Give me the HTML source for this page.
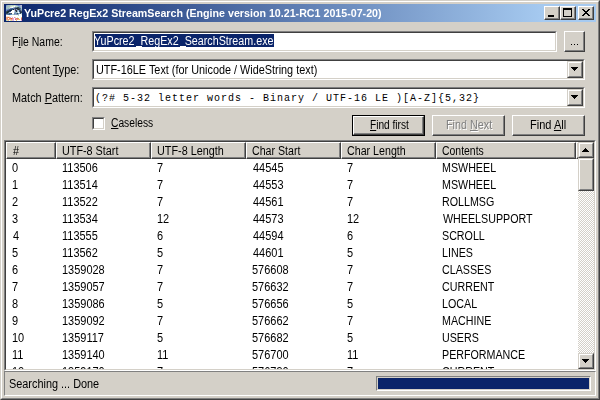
<!DOCTYPE html>
<html><head><meta charset="utf-8">
<style>
*{margin:0;padding:0;box-sizing:border-box}
html,body{width:600px;height:400px;overflow:hidden;background:#d4d0c8}
body{position:relative;font-family:"Liberation Sans",sans-serif;font-size:11px;color:#000}
.a{position:absolute}
.t{position:absolute;white-space:nowrap;line-height:13px}
.sunk{position:absolute;border-top:1px solid #808080;border-left:1px solid #808080;border-right:1px solid #fff;border-bottom:1px solid #fff}
.sunk>.in{position:absolute;left:0;top:0;right:0;bottom:0;border-top:1px solid #404040;border-left:1px solid #404040;border-right:1px solid #d4d0c8;border-bottom:1px solid #d4d0c8}
.rais{position:absolute;border-top:1px solid #d4d0c8;border-left:1px solid #d4d0c8;border-right:1px solid #404040;border-bottom:1px solid #404040;background:#d4d0c8}
.rais>.in{position:absolute;left:0;top:0;right:0;bottom:0;border-top:1px solid #fff;border-left:1px solid #fff;border-right:1px solid #808080;border-bottom:1px solid #808080}
.btn{position:absolute;border-top:1px solid #fff;border-left:1px solid #fff;border-right:1px solid #404040;border-bottom:1px solid #404040;background:#d4d0c8}
.btn>.in{position:absolute;left:0;top:0;right:0;bottom:0;border-right:1px solid #808080;border-bottom:1px solid #808080}
.u{text-decoration:underline}
svg{position:absolute;display:block}
.hd{position:absolute;top:0;height:17px;background:#d4d0c8;border-top:1px solid #fff;border-left:1px solid #fff;border-right:1px solid #404040;border-bottom:1px solid #404040}
.hd>.hi{position:absolute;left:0;top:0;right:0;bottom:0;border-right:1px solid #808080;border-bottom:1px solid #808080}
</style></head><body>
<div class="a" style="left:0;top:0;width:600px;height:400px;border-top:1px solid #d4d0c8;border-left:1px solid #d4d0c8;border-right:1px solid #404040;border-bottom:1px solid #404040"><div class="a" style="left:0;top:0;right:0;bottom:0;border-top:1px solid #fff;border-left:1px solid #fff;border-right:1px solid #808080;border-bottom:1px solid #808080"></div></div>
<div class="a" style="left:4px;top:4px;width:592px;height:18px;background:linear-gradient(to right,#0a246a 0,#a6caf0 540px)"></div>
<svg style="left:6px;top:5px" width="16" height="16" shape-rendering="crispEdges"><rect x="0" y="0" width="1" height="1" fill="#7090c8"/><rect x="1" y="0" width="1" height="1" fill="#90b0c0"/><rect x="2" y="0" width="1" height="1" fill="#a0c0c0"/><rect x="3" y="0" width="1" height="1" fill="#a0c0c0"/><rect x="4" y="0" width="1" height="1" fill="#b0c8c0"/><rect x="5" y="0" width="1" height="1" fill="#c0d0d0"/><rect x="6" y="0" width="1" height="1" fill="#b0d0b0"/><rect x="7" y="0" width="1" height="1" fill="#b0d8b0"/><rect x="8" y="0" width="1" height="1" fill="#d0d0e0"/><rect x="9" y="0" width="1" height="1" fill="#b0c8d0"/><rect x="10" y="0" width="1" height="1" fill="#90a8d0"/><rect x="11" y="0" width="1" height="1" fill="#8098c8"/><rect x="12" y="0" width="1" height="1" fill="#6080d0"/><rect x="13" y="0" width="1" height="1" fill="#7090d0"/><rect x="14" y="0" width="1" height="1" fill="#b0b0d0"/><rect x="15" y="0" width="1" height="1" fill="#c0b0d0"/><rect x="0" y="1" width="1" height="1" fill="#90b0d0"/><rect x="1" y="1" width="1" height="1" fill="#a0c0c0"/><rect x="2" y="1" width="1" height="1" fill="#b0b0c0"/><rect x="3" y="1" width="1" height="1" fill="#a8c8b8"/><rect x="4" y="1" width="1" height="1" fill="#c0d8c0"/><rect x="5" y="1" width="1" height="1" fill="#d0e0d0"/><rect x="6" y="1" width="1" height="1" fill="#e0f0e0"/><rect x="7" y="1" width="1" height="1" fill="#e0f0e0"/><rect x="8" y="1" width="1" height="1" fill="#ffffff"/><rect x="9" y="1" width="1" height="1" fill="#c0e0c0"/><rect x="10" y="1" width="1" height="1" fill="#c0e0c0"/><rect x="11" y="1" width="1" height="1" fill="#b0d0c0"/><rect x="12" y="1" width="1" height="1" fill="#90b0c0"/><rect x="13" y="1" width="1" height="1" fill="#80a0c0"/><rect x="14" y="1" width="1" height="1" fill="#a0b0d0"/><rect x="15" y="1" width="1" height="1" fill="#a0c0d0"/><rect x="0" y="2" width="1" height="1" fill="#a0c0c0"/><rect x="1" y="2" width="1" height="1" fill="#a0c0c0"/><rect x="2" y="2" width="1" height="1" fill="#b0c0c0"/><rect x="3" y="2" width="1" height="1" fill="#b0d0c0"/><rect x="4" y="2" width="1" height="1" fill="#e0f0e0"/><rect x="5" y="2" width="1" height="1" fill="#f0f8f0"/><rect x="6" y="2" width="1" height="1" fill="#ffffff"/><rect x="7" y="2" width="1" height="1" fill="#c0c8e0"/><rect x="8" y="2" width="1" height="1" fill="#90a8c0"/><rect x="9" y="2" width="1" height="1" fill="#607890"/><rect x="10" y="2" width="1" height="1" fill="#6080a0"/><rect x="11" y="2" width="1" height="1" fill="#405060"/><rect x="12" y="2" width="1" height="1" fill="#305060"/><rect x="13" y="2" width="1" height="1" fill="#6080a0"/><rect x="14" y="2" width="1" height="1" fill="#90b0c0"/><rect x="15" y="2" width="1" height="1" fill="#c0c0d0"/><rect x="0" y="3" width="1" height="1" fill="#a0c0c0"/><rect x="1" y="3" width="1" height="1" fill="#a0c0c0"/><rect x="2" y="3" width="1" height="1" fill="#90b0c0"/><rect x="3" y="3" width="1" height="1" fill="#a0c0d0"/><rect x="4" y="3" width="1" height="1" fill="#6080b0"/><rect x="5" y="3" width="1" height="1" fill="#5070b0"/><rect x="6" y="3" width="1" height="1" fill="#4060a0"/><rect x="7" y="3" width="1" height="1" fill="#6080b0"/><rect x="8" y="3" width="1" height="1" fill="#506080"/><rect x="9" y="3" width="1" height="1" fill="#304060"/><rect x="10" y="3" width="1" height="1" fill="#203040"/><rect x="11" y="3" width="1" height="1" fill="#203030"/><rect x="12" y="3" width="1" height="1" fill="#304050"/><rect x="13" y="3" width="1" height="1" fill="#305060"/><rect x="14" y="3" width="1" height="1" fill="#507090"/><rect x="15" y="3" width="1" height="1" fill="#a0c0d0"/><rect x="0" y="4" width="1" height="1" fill="#80a0c0"/><rect x="1" y="4" width="1" height="1" fill="#7090c0"/><rect x="2" y="4" width="1" height="1" fill="#6080b0"/><rect x="3" y="4" width="1" height="1" fill="#405080"/><rect x="4" y="4" width="1" height="1" fill="#305080"/><rect x="5" y="4" width="1" height="1" fill="#204060"/><rect x="6" y="4" width="1" height="1" fill="#306080"/><rect x="7" y="4" width="1" height="1" fill="#102030"/><rect x="8" y="4" width="1" height="1" fill="#8090b0"/><rect x="9" y="4" width="1" height="1" fill="#504060"/><rect x="10" y="4" width="1" height="1" fill="#80a0d0"/><rect x="11" y="4" width="1" height="1" fill="#405060"/><rect x="12" y="4" width="1" height="1" fill="#203030"/><rect x="13" y="4" width="1" height="1" fill="#304050"/><rect x="14" y="4" width="1" height="1" fill="#6080a0"/><rect x="15" y="4" width="1" height="1" fill="#90b0c0"/><rect x="0" y="5" width="1" height="1" fill="#6080d0"/><rect x="1" y="5" width="1" height="1" fill="#405080"/><rect x="2" y="5" width="1" height="1" fill="#305070"/><rect x="3" y="5" width="1" height="1" fill="#203050"/><rect x="4" y="5" width="1" height="1" fill="#102040"/><rect x="5" y="5" width="1" height="1" fill="#204050"/><rect x="6" y="5" width="1" height="1" fill="#ffffff"/><rect x="7" y="5" width="1" height="1" fill="#ffffff"/><rect x="8" y="5" width="1" height="1" fill="#c0d8f0"/><rect x="9" y="5" width="1" height="1" fill="#503050"/><rect x="10" y="5" width="1" height="1" fill="#304040"/><rect x="11" y="5" width="1" height="1" fill="#a0b0d0"/><rect x="12" y="5" width="1" height="1" fill="#a0c0d0"/><rect x="13" y="5" width="1" height="1" fill="#305080"/><rect x="14" y="5" width="1" height="1" fill="#405070"/><rect x="15" y="5" width="1" height="1" fill="#8090a0"/><rect x="0" y="6" width="1" height="1" fill="#405060"/><rect x="1" y="6" width="1" height="1" fill="#204040"/><rect x="2" y="6" width="1" height="1" fill="#102030"/><rect x="3" y="6" width="1" height="1" fill="#203060"/><rect x="4" y="6" width="1" height="1" fill="#304080"/><rect x="5" y="6" width="1" height="1" fill="#ffffff"/><rect x="6" y="6" width="1" height="1" fill="#ffffff"/><rect x="7" y="6" width="1" height="1" fill="#ffffff"/><rect x="8" y="6" width="1" height="1" fill="#c0d8f0"/><rect x="9" y="6" width="1" height="1" fill="#80a0b0"/><rect x="10" y="6" width="1" height="1" fill="#203030"/><rect x="11" y="6" width="1" height="1" fill="#a0b0c0"/><rect x="12" y="6" width="1" height="1" fill="#d0e0f0"/><rect x="13" y="6" width="1" height="1" fill="#305080"/><rect x="14" y="6" width="1" height="1" fill="#203060"/><rect x="15" y="6" width="1" height="1" fill="#405060"/><rect x="0" y="7" width="1" height="1" fill="#204040"/><rect x="1" y="7" width="1" height="1" fill="#102030"/><rect x="2" y="7" width="1" height="1" fill="#305060"/><rect x="3" y="7" width="1" height="1" fill="#a0c0e0"/><rect x="4" y="7" width="1" height="1" fill="#e0f0ff"/><rect x="5" y="7" width="1" height="1" fill="#ffffff"/><rect x="6" y="7" width="1" height="1" fill="#ffffff"/><rect x="7" y="7" width="1" height="1" fill="#ffffff"/><rect x="8" y="7" width="1" height="1" fill="#a0c0d0"/><rect x="9" y="7" width="1" height="1" fill="#8098b0"/><rect x="10" y="7" width="1" height="1" fill="#a0c0d0"/><rect x="11" y="7" width="1" height="1" fill="#b0d0e0"/><rect x="12" y="7" width="1" height="1" fill="#ffffff"/><rect x="13" y="7" width="1" height="1" fill="#a0c0d0"/><rect x="14" y="7" width="1" height="1" fill="#203040"/><rect x="15" y="7" width="1" height="1" fill="#304050"/><rect x="0" y="8" width="1" height="1" fill="#304050"/><rect x="1" y="8" width="1" height="1" fill="#405060"/><rect x="2" y="8" width="1" height="1" fill="#6080a0"/><rect x="3" y="8" width="1" height="1" fill="#405070"/><rect x="4" y="8" width="1" height="1" fill="#506080"/><rect x="5" y="8" width="1" height="1" fill="#405060"/><rect x="6" y="8" width="1" height="1" fill="#ffffff"/><rect x="7" y="8" width="1" height="1" fill="#ffffff"/><rect x="8" y="8" width="1" height="1" fill="#6080b0"/><rect x="9" y="8" width="1" height="1" fill="#7090c0"/><rect x="10" y="8" width="1" height="1" fill="#6080b0"/><rect x="11" y="8" width="1" height="1" fill="#305050"/><rect x="12" y="8" width="1" height="1" fill="#7090c0"/><rect x="13" y="8" width="1" height="1" fill="#7090c0"/><rect x="14" y="8" width="1" height="1" fill="#405060"/><rect x="15" y="8" width="1" height="1" fill="#a0c0d0"/><rect x="0" y="9" width="1" height="1" fill="#7090c0"/><rect x="1" y="9" width="1" height="1" fill="#6080a0"/><rect x="2" y="9" width="1" height="1" fill="#4070a0"/><rect x="3" y="9" width="1" height="1" fill="#306090"/><rect x="4" y="9" width="1" height="1" fill="#5080b0"/><rect x="5" y="9" width="1" height="1" fill="#7090c0"/><rect x="6" y="9" width="1" height="1" fill="#b0d0e0"/><rect x="7" y="9" width="1" height="1" fill="#a0c8c0"/><rect x="8" y="9" width="1" height="1" fill="#8090b0"/><rect x="9" y="9" width="1" height="1" fill="#90b0c0"/><rect x="10" y="9" width="1" height="1" fill="#8090c0"/><rect x="11" y="9" width="1" height="1" fill="#7090b0"/><rect x="12" y="9" width="1" height="1" fill="#90b0c0"/><rect x="13" y="9" width="1" height="1" fill="#ffffff"/><rect x="14" y="9" width="1" height="1" fill="#ffffff"/><rect x="15" y="9" width="1" height="1" fill="#e0f0e0"/><rect x="0" y="10" width="1" height="1" fill="#ffffff"/><rect x="1" y="10" width="1" height="1" fill="#ffffff"/><rect x="2" y="10" width="1" height="1" fill="#ffffff"/><rect x="3" y="10" width="1" height="1" fill="#f0f8ff"/><rect x="4" y="10" width="1" height="1" fill="#f0f8f8"/><rect x="5" y="10" width="1" height="1" fill="#ffffff"/><rect x="6" y="10" width="1" height="1" fill="#ffffff"/><rect x="7" y="10" width="1" height="1" fill="#ffffff"/><rect x="8" y="10" width="1" height="1" fill="#ffffff"/><rect x="9" y="10" width="1" height="1" fill="#ffffff"/><rect x="10" y="10" width="1" height="1" fill="#ffffff"/><rect x="11" y="10" width="1" height="1" fill="#ffffff"/><rect x="12" y="10" width="1" height="1" fill="#c0e0c0"/><rect x="13" y="10" width="1" height="1" fill="#ffffff"/><rect x="14" y="10" width="1" height="1" fill="#ffffff"/><rect x="15" y="10" width="1" height="1" fill="#ffffff"/><rect x="0" y="11" width="1" height="1" fill="#ffe8d8"/><rect x="1" y="11" width="1" height="1" fill="#ffe0d0"/><rect x="2" y="11" width="1" height="1" fill="#ffe8e0"/><rect x="3" y="11" width="1" height="1" fill="#fff0e0"/><rect x="4" y="11" width="1" height="1" fill="#ffffff"/><rect x="5" y="11" width="1" height="1" fill="#f8f0e8"/><rect x="6" y="11" width="1" height="1" fill="#ffffff"/><rect x="7" y="11" width="1" height="1" fill="#ffffff"/><rect x="8" y="11" width="1" height="1" fill="#ffffff"/><rect x="9" y="11" width="1" height="1" fill="#ffffff"/><rect x="10" y="11" width="1" height="1" fill="#ffffff"/><rect x="11" y="11" width="1" height="1" fill="#ffffff"/><rect x="12" y="11" width="1" height="1" fill="#ffffff"/><rect x="13" y="11" width="1" height="1" fill="#ffffff"/><rect x="14" y="11" width="1" height="1" fill="#ffffff"/><rect x="15" y="11" width="1" height="1" fill="#ffffff"/><rect x="0" y="12" width="1" height="1" fill="#f0a080"/><rect x="1" y="12" width="1" height="1" fill="#e09060"/><rect x="2" y="12" width="1" height="1" fill="#e08040"/><rect x="3" y="12" width="1" height="1" fill="#f0a080"/><rect x="4" y="12" width="1" height="1" fill="#d0a0d0"/><rect x="5" y="12" width="1" height="1" fill="#ffffff"/><rect x="6" y="12" width="1" height="1" fill="#e0b0d0"/><rect x="7" y="12" width="1" height="1" fill="#ffffff"/><rect x="8" y="12" width="1" height="1" fill="#e080c0"/><rect x="9" y="12" width="1" height="1" fill="#d0e0d0"/><rect x="10" y="12" width="1" height="1" fill="#ffffff"/><rect x="11" y="12" width="1" height="1" fill="#d0f0d0"/><rect x="12" y="12" width="1" height="1" fill="#ffffff"/><rect x="13" y="12" width="1" height="1" fill="#ffffff"/><rect x="14" y="12" width="1" height="1" fill="#ffffff"/><rect x="15" y="12" width="1" height="1" fill="#f0c080"/><rect x="0" y="13" width="1" height="1" fill="#f0a080"/><rect x="1" y="13" width="1" height="1" fill="#f09070"/><rect x="2" y="13" width="1" height="1" fill="#ffffff"/><rect x="3" y="13" width="1" height="1" fill="#f09070"/><rect x="4" y="13" width="1" height="1" fill="#e08060"/><rect x="5" y="13" width="1" height="1" fill="#e06030"/><rect x="6" y="13" width="1" height="1" fill="#f09080"/><rect x="7" y="13" width="1" height="1" fill="#e0a0d0"/><rect x="8" y="13" width="1" height="1" fill="#ffffff"/><rect x="9" y="13" width="1" height="1" fill="#f0a090"/><rect x="10" y="13" width="1" height="1" fill="#f08070"/><rect x="11" y="13" width="1" height="1" fill="#e08060"/><rect x="12" y="13" width="1" height="1" fill="#e09070"/><rect x="13" y="13" width="1" height="1" fill="#ffffff"/><rect x="14" y="13" width="1" height="1" fill="#ffffff"/><rect x="15" y="13" width="1" height="1" fill="#e07070"/><rect x="0" y="14" width="1" height="1" fill="#f0a080"/><rect x="1" y="14" width="1" height="1" fill="#f0a080"/><rect x="2" y="14" width="1" height="1" fill="#f0a080"/><rect x="3" y="14" width="1" height="1" fill="#f0b080"/><rect x="4" y="14" width="1" height="1" fill="#f0b090"/><rect x="5" y="14" width="1" height="1" fill="#f0a080"/><rect x="6" y="14" width="1" height="1" fill="#e0a0d0"/><rect x="7" y="14" width="1" height="1" fill="#e0a0e0"/><rect x="8" y="14" width="1" height="1" fill="#ffffff"/><rect x="9" y="14" width="1" height="1" fill="#e06070"/><rect x="10" y="14" width="1" height="1" fill="#e090c0"/><rect x="11" y="14" width="1" height="1" fill="#f0a070"/><rect x="12" y="14" width="1" height="1" fill="#f0c070"/><rect x="13" y="14" width="1" height="1" fill="#f0c060"/><rect x="14" y="14" width="1" height="1" fill="#ffffff"/><rect x="15" y="14" width="1" height="1" fill="#e07070"/><rect x="0" y="15" width="1" height="1" fill="#a0e0c0"/><rect x="1" y="15" width="1" height="1" fill="#f0c0a0"/><rect x="2" y="15" width="1" height="1" fill="#e0c080"/><rect x="3" y="15" width="1" height="1" fill="#ffffff"/><rect x="4" y="15" width="1" height="1" fill="#e0e0c0"/><rect x="5" y="15" width="1" height="1" fill="#f0d090"/><rect x="6" y="15" width="1" height="1" fill="#e0c0e0"/><rect x="7" y="15" width="1" height="1" fill="#e0b0e0"/><rect x="8" y="15" width="1" height="1" fill="#ffffff"/><rect x="9" y="15" width="1" height="1" fill="#ffffff"/><rect x="10" y="15" width="1" height="1" fill="#f0c060"/><rect x="11" y="15" width="1" height="1" fill="#ffffff"/><rect x="12" y="15" width="1" height="1" fill="#ffffff"/><rect x="13" y="15" width="1" height="1" fill="#ffffff"/><rect x="14" y="15" width="1" height="1" fill="#ffffff"/><rect x="15" y="15" width="1" height="1" fill="#e0a0d0"/></svg>
<div class="t" style="left:24.03px;top:7px;font-size:11px;font-weight:bold;color:#fff;transform:scaleX(0.9699);transform-origin:0 0">YuPcre2 RegEx2 StreamSearch (Engine version 10.21-RC1 2015-07-20)</div>
<div class="btn" style="left:544px;top:6px;width:16px;height:14px"><div class="in"></div></div>
<div class="a" style="left:548px;top:15px;width:6px;height:2px;background:#000"></div>
<div class="btn" style="left:560px;top:6px;width:16px;height:14px"><div class="in"></div></div>
<div class="a" style="left:563px;top:8px;width:9px;height:9px;border:1px solid #000;border-top-width:2px"></div>
<div class="btn" style="left:578px;top:6px;width:16px;height:14px"><div class="in"></div></div>
<svg style="left:582px;top:9px" width="8" height="7" shape-rendering="crispEdges"><path fill="#000" d="M0 0h2v1h-2zM6 0h2v1h-2zM1 1h2v1h-2zM5 1h2v1h-2zM2 2h4v1h-4zM3 3h2v1h-2zM2 4h4v1h-4zM1 5h2v1h-2zM5 5h2v1h-2zM0 6h2v1h-2zM6 6h2v1h-2z"/></svg>
<div class="t" style="left:12.13px;top:36px;font-size:12px;;transform:scaleX(0.8727);transform-origin:0 0">F<span class="u">i</span>le Name:</div>
<div class="t" style="left:12.10px;top:64px;font-size:12px;;transform:scaleX(0.9028);transform-origin:0 0">Content <span class="u">T</span>ype:</div>
<div class="t" style="left:12.09px;top:92px;font-size:12px;;transform:scaleX(0.9067);transform-origin:0 0">Match <span class="u">P</span>attern:</div>
<div class="sunk" style="left:92px;top:31px;width:465px;height:21px;background:#fff"><div class="in"></div></div>
<div class="a" style="left:95px;top:34px;width:179px;height:13px;background:#0a246a"></div>
<div class="t" style="left:94.11px;top:35px;font-size:12px;color:#fff;transform:scaleX(0.8939);transform-origin:0 0">YuPcre2_RegEx2_SearchStream.exe</div>
<div class="a" style="left:136px;top:46px;width:6px;height:1px;background:#fff"></div>
<div class="a" style="left:180px;top:46px;width:6px;height:1px;background:#fff"></div>
<div class="btn" style="left:564px;top:31px;width:21px;height:21px"><div class="in"></div></div>
<div class="a" style="left:571px;top:44px;width:1px;height:1px;background:#000"></div>
<div class="a" style="left:574px;top:44px;width:1px;height:1px;background:#000"></div>
<div class="a" style="left:577px;top:44px;width:1px;height:1px;background:#000"></div>
<div class="sunk" style="left:92px;top:59px;width:493px;height:21px;background:#fff"><div class="in"></div></div>
<div class="t" style="left:96.10px;top:64px;font-size:12px;;transform:scaleX(0.9050);transform-origin:0 0">UTF-16LE Text (for Unicode / WideString text)</div>
<div class="rais" style="left:567px;top:61px;width:16px;height:17px"><div class="in"></div></div>
<svg style="left:571px;top:67px" width="7" height="4" shape-rendering="crispEdges"><path fill="#000" d="M0 0h7v1h-7zM1 1h5v1h-5zM2 2h3v1h-3zM3 3h1v1h-1z"/></svg>
<div class="sunk" style="left:92px;top:87px;width:493px;height:21px;background:#fff"><div class="in"></div></div>
<div class="t" style="left:95px;top:92px;font-family:'Liberation Mono',monospace;font-size:10px;letter-spacing:1px">(?# 5-32 letter words - Binary / UTF-16 LE )[A-Z]{5,32}</div>
<div class="rais" style="left:567px;top:89px;width:16px;height:17px"><div class="in"></div></div>
<svg style="left:571px;top:95px" width="7" height="4" shape-rendering="crispEdges"><path fill="#000" d="M0 0h7v1h-7zM1 1h5v1h-5zM2 2h3v1h-3zM3 3h1v1h-1z"/></svg>
<div class="sunk" style="left:92px;top:117px;width:13px;height:13px;background:#fff"><div class="in"></div></div>
<div class="t" style="left:111.00px;top:117px;font-size:12px;;transform:scaleX(0.8542);transform-origin:0 0"><span class="u">C</span>aseless</div>
<div class="a" style="left:352px;top:115px;width:73px;height:21px;border:1px solid #000"><div class="btn" style="left:0;top:0;right:0;bottom:0"><div class="in"></div></div></div>
<div class="t" style="left:370.00px;top:119px;font-size:12px;;transform:scaleX(0.8444);transform-origin:0 0"><span class="u">F</span>ind first</div>
<div class="btn" style="left:432px;top:115px;width:73px;height:21px"><div class="in"></div></div>
<div class="t" style="left:446.10px;top:119px;font-size:12px;color:#808080;text-shadow:1px 1px 0 #fff;transform:scaleX(0.8980);transform-origin:0 0">Find <span class="u">N</span>ext</div>
<div class="btn" style="left:512px;top:115px;width:73px;height:21px"><div class="in"></div></div>
<div class="t" style="left:530.08px;top:119px;font-size:12px;;transform:scaleX(0.9189);transform-origin:0 0">Find <span class="u">A</span>ll</div>
<div class="sunk" style="left:4px;top:140px;width:592px;height:231px;background:#fff"><div class="in"></div></div>
<div class="a" style="left:6px;top:142px;width:588px;height:227px;overflow:hidden">
<div class="hd" style="left:0px;width:50px"><div class="hi"></div></div>
<div class="hd" style="left:50px;width:95px"><div class="hi"></div></div>
<div class="hd" style="left:145px;width:95px"><div class="hi"></div></div>
<div class="hd" style="left:240px;width:95px"><div class="hi"></div></div>
<div class="hd" style="left:335px;width:95px"><div class="hi"></div></div>
<div class="hd" style="left:430px;width:140px"><div class="hi"></div></div>
<div class="hd" style="left:570px;width:100px"><div class="hi"></div></div>
</div>
<div class="a" style="left:6px;top:142px;width:572px;height:227px;overflow:hidden"><div class="a" style="left:-6px;top:-142px;width:600px;height:400px">
<div class="t" style="left:13.00px;top:145px;font-size:12px;;transform:scaleX(0.9000);transform-origin:0 0">#</div>
<div class="t" style="left:62.10px;top:145px;font-size:12px;;transform:scaleX(0.9000);transform-origin:0 0">UTF-8 Start</div>
<div class="t" style="left:157.10px;top:145px;font-size:12px;;transform:scaleX(0.9014);transform-origin:0 0">UTF-8 Length</div>
<div class="t" style="left:252.12px;top:145px;font-size:12px;;transform:scaleX(0.8846);transform-origin:0 0">Char Start</div>
<div class="t" style="left:347.11px;top:145px;font-size:12px;;transform:scaleX(0.8889);transform-origin:0 0">Char Length</div>
<div class="t" style="left:442.13px;top:145px;font-size:12px;;transform:scaleX(0.8696);transform-origin:0 0">Contents</div>
<div class="t" style="left:12.09px;top:162px;font-size:12px;;transform:scaleX(0.9140);transform-origin:0 0">0</div>
<div class="t" style="left:62.09px;top:162px;font-size:12px;;transform:scaleX(0.9140);transform-origin:0 0">113506</div>
<div class="t" style="left:157.09px;top:162px;font-size:12px;;transform:scaleX(0.9140);transform-origin:0 0">7</div>
<div class="t" style="left:253.00px;top:162px;font-size:12px;;transform:scaleX(0.9140);transform-origin:0 0">44545</div>
<div class="t" style="left:347.09px;top:162px;font-size:12px;;transform:scaleX(0.9140);transform-origin:0 0">7</div>
<div class="t" style="left:442.11px;top:162px;font-size:12px;;transform:scaleX(0.8914);transform-origin:0 0">MSWHEEL</div>
<div class="t" style="left:12.09px;top:179px;font-size:12px;;transform:scaleX(0.9140);transform-origin:0 0">1</div>
<div class="t" style="left:62.09px;top:179px;font-size:12px;;transform:scaleX(0.9140);transform-origin:0 0">113514</div>
<div class="t" style="left:157.09px;top:179px;font-size:12px;;transform:scaleX(0.9140);transform-origin:0 0">7</div>
<div class="t" style="left:253.00px;top:179px;font-size:12px;;transform:scaleX(0.9140);transform-origin:0 0">44553</div>
<div class="t" style="left:347.09px;top:179px;font-size:12px;;transform:scaleX(0.9140);transform-origin:0 0">7</div>
<div class="t" style="left:442.11px;top:179px;font-size:12px;;transform:scaleX(0.8914);transform-origin:0 0">MSWHEEL</div>
<div class="t" style="left:12.09px;top:196px;font-size:12px;;transform:scaleX(0.9140);transform-origin:0 0">2</div>
<div class="t" style="left:62.09px;top:196px;font-size:12px;;transform:scaleX(0.9140);transform-origin:0 0">113522</div>
<div class="t" style="left:157.09px;top:196px;font-size:12px;;transform:scaleX(0.9140);transform-origin:0 0">7</div>
<div class="t" style="left:253.00px;top:196px;font-size:12px;;transform:scaleX(0.9140);transform-origin:0 0">44561</div>
<div class="t" style="left:347.09px;top:196px;font-size:12px;;transform:scaleX(0.9140);transform-origin:0 0">7</div>
<div class="t" style="left:442.11px;top:196px;font-size:12px;;transform:scaleX(0.8914);transform-origin:0 0">ROLLMSG</div>
<div class="t" style="left:12.09px;top:213px;font-size:12px;;transform:scaleX(0.9140);transform-origin:0 0">3</div>
<div class="t" style="left:62.09px;top:213px;font-size:12px;;transform:scaleX(0.9140);transform-origin:0 0">113534</div>
<div class="t" style="left:157.09px;top:213px;font-size:12px;;transform:scaleX(0.9140);transform-origin:0 0">12</div>
<div class="t" style="left:253.00px;top:213px;font-size:12px;;transform:scaleX(0.9140);transform-origin:0 0">44573</div>
<div class="t" style="left:347.09px;top:213px;font-size:12px;;transform:scaleX(0.9140);transform-origin:0 0">12</div>
<div class="t" style="left:443.00px;top:213px;font-size:12px;;transform:scaleX(0.8914);transform-origin:0 0">WHEELSUPPORT</div>
<div class="t" style="left:13.00px;top:230px;font-size:12px;;transform:scaleX(0.9140);transform-origin:0 0">4</div>
<div class="t" style="left:62.09px;top:230px;font-size:12px;;transform:scaleX(0.9140);transform-origin:0 0">113555</div>
<div class="t" style="left:157.09px;top:230px;font-size:12px;;transform:scaleX(0.9140);transform-origin:0 0">6</div>
<div class="t" style="left:253.00px;top:230px;font-size:12px;;transform:scaleX(0.9140);transform-origin:0 0">44594</div>
<div class="t" style="left:347.09px;top:230px;font-size:12px;;transform:scaleX(0.9140);transform-origin:0 0">6</div>
<div class="t" style="left:442.11px;top:230px;font-size:12px;;transform:scaleX(0.8914);transform-origin:0 0">SCROLL</div>
<div class="t" style="left:12.09px;top:247px;font-size:12px;;transform:scaleX(0.9140);transform-origin:0 0">5</div>
<div class="t" style="left:62.09px;top:247px;font-size:12px;;transform:scaleX(0.9140);transform-origin:0 0">113562</div>
<div class="t" style="left:157.09px;top:247px;font-size:12px;;transform:scaleX(0.9140);transform-origin:0 0">5</div>
<div class="t" style="left:253.00px;top:247px;font-size:12px;;transform:scaleX(0.9140);transform-origin:0 0">44601</div>
<div class="t" style="left:347.09px;top:247px;font-size:12px;;transform:scaleX(0.9140);transform-origin:0 0">5</div>
<div class="t" style="left:442.11px;top:247px;font-size:12px;;transform:scaleX(0.8914);transform-origin:0 0">LINES</div>
<div class="t" style="left:12.09px;top:264px;font-size:12px;;transform:scaleX(0.9140);transform-origin:0 0">6</div>
<div class="t" style="left:62.09px;top:264px;font-size:12px;;transform:scaleX(0.9140);transform-origin:0 0">1359028</div>
<div class="t" style="left:157.09px;top:264px;font-size:12px;;transform:scaleX(0.9140);transform-origin:0 0">7</div>
<div class="t" style="left:252.09px;top:264px;font-size:12px;;transform:scaleX(0.9140);transform-origin:0 0">576608</div>
<div class="t" style="left:347.09px;top:264px;font-size:12px;;transform:scaleX(0.9140);transform-origin:0 0">7</div>
<div class="t" style="left:442.11px;top:264px;font-size:12px;;transform:scaleX(0.8914);transform-origin:0 0">CLASSES</div>
<div class="t" style="left:12.09px;top:281px;font-size:12px;;transform:scaleX(0.9140);transform-origin:0 0">7</div>
<div class="t" style="left:62.09px;top:281px;font-size:12px;;transform:scaleX(0.9140);transform-origin:0 0">1359057</div>
<div class="t" style="left:157.09px;top:281px;font-size:12px;;transform:scaleX(0.9140);transform-origin:0 0">7</div>
<div class="t" style="left:252.09px;top:281px;font-size:12px;;transform:scaleX(0.9140);transform-origin:0 0">576632</div>
<div class="t" style="left:347.09px;top:281px;font-size:12px;;transform:scaleX(0.9140);transform-origin:0 0">7</div>
<div class="t" style="left:442.11px;top:281px;font-size:12px;;transform:scaleX(0.8914);transform-origin:0 0">CURRENT</div>
<div class="t" style="left:12.09px;top:298px;font-size:12px;;transform:scaleX(0.9140);transform-origin:0 0">8</div>
<div class="t" style="left:62.09px;top:298px;font-size:12px;;transform:scaleX(0.9140);transform-origin:0 0">1359086</div>
<div class="t" style="left:157.09px;top:298px;font-size:12px;;transform:scaleX(0.9140);transform-origin:0 0">5</div>
<div class="t" style="left:252.09px;top:298px;font-size:12px;;transform:scaleX(0.9140);transform-origin:0 0">576656</div>
<div class="t" style="left:347.09px;top:298px;font-size:12px;;transform:scaleX(0.9140);transform-origin:0 0">5</div>
<div class="t" style="left:442.11px;top:298px;font-size:12px;;transform:scaleX(0.8914);transform-origin:0 0">LOCAL</div>
<div class="t" style="left:12.09px;top:315px;font-size:12px;;transform:scaleX(0.9140);transform-origin:0 0">9</div>
<div class="t" style="left:62.09px;top:315px;font-size:12px;;transform:scaleX(0.9140);transform-origin:0 0">1359092</div>
<div class="t" style="left:157.09px;top:315px;font-size:12px;;transform:scaleX(0.9140);transform-origin:0 0">7</div>
<div class="t" style="left:252.09px;top:315px;font-size:12px;;transform:scaleX(0.9140);transform-origin:0 0">576662</div>
<div class="t" style="left:347.09px;top:315px;font-size:12px;;transform:scaleX(0.9140);transform-origin:0 0">7</div>
<div class="t" style="left:442.11px;top:315px;font-size:12px;;transform:scaleX(0.8914);transform-origin:0 0">MACHINE</div>
<div class="t" style="left:12.09px;top:332px;font-size:12px;;transform:scaleX(0.9140);transform-origin:0 0">10</div>
<div class="t" style="left:62.09px;top:332px;font-size:12px;;transform:scaleX(0.9140);transform-origin:0 0">1359117</div>
<div class="t" style="left:157.09px;top:332px;font-size:12px;;transform:scaleX(0.9140);transform-origin:0 0">5</div>
<div class="t" style="left:252.09px;top:332px;font-size:12px;;transform:scaleX(0.9140);transform-origin:0 0">576682</div>
<div class="t" style="left:347.09px;top:332px;font-size:12px;;transform:scaleX(0.9140);transform-origin:0 0">5</div>
<div class="t" style="left:442.11px;top:332px;font-size:12px;;transform:scaleX(0.8914);transform-origin:0 0">USERS</div>
<div class="t" style="left:12.09px;top:349px;font-size:12px;;transform:scaleX(0.9140);transform-origin:0 0">11</div>
<div class="t" style="left:62.09px;top:349px;font-size:12px;;transform:scaleX(0.9140);transform-origin:0 0">1359140</div>
<div class="t" style="left:157.09px;top:349px;font-size:12px;;transform:scaleX(0.9140);transform-origin:0 0">11</div>
<div class="t" style="left:252.09px;top:349px;font-size:12px;;transform:scaleX(0.9140);transform-origin:0 0">576700</div>
<div class="t" style="left:347.09px;top:349px;font-size:12px;;transform:scaleX(0.9140);transform-origin:0 0">11</div>
<div class="t" style="left:442.11px;top:349px;font-size:12px;;transform:scaleX(0.8914);transform-origin:0 0">PERFORMANCE</div>
<div class="t" style="left:12.09px;top:366px;font-size:12px;;transform:scaleX(0.9140);transform-origin:0 0">12</div>
<div class="t" style="left:62.09px;top:366px;font-size:12px;;transform:scaleX(0.9140);transform-origin:0 0">1359170</div>
<div class="t" style="left:157.09px;top:366px;font-size:12px;;transform:scaleX(0.9140);transform-origin:0 0">7</div>
<div class="t" style="left:252.09px;top:366px;font-size:12px;;transform:scaleX(0.9140);transform-origin:0 0">576730</div>
<div class="t" style="left:347.09px;top:366px;font-size:12px;;transform:scaleX(0.9140);transform-origin:0 0">7</div>
<div class="t" style="left:442.11px;top:366px;font-size:12px;;transform:scaleX(0.8914);transform-origin:0 0">CURRENT</div>
</div></div>
<div class="a" style="left:578px;top:158px;width:16px;height:195px;background-color:#fff;background-image:repeating-conic-gradient(#d4d0c8 0 25%,#fff 0 50%);background-size:2px 2px"></div>
<div class="rais" style="left:578px;top:142px;width:16px;height:16px"><div class="in"></div></div>
<svg style="left:582px;top:148px" width="7" height="4" shape-rendering="crispEdges"><path fill="#000" d="M3 0h1v1h-1zM2 1h3v1h-3zM1 2h5v1h-5zM0 3h7v1h-7z"/></svg>
<div class="rais" style="left:578px;top:158px;width:16px;height:33px"><div class="in"></div></div>
<div class="rais" style="left:578px;top:353px;width:16px;height:16px"><div class="in"></div></div>
<svg style="left:582px;top:359px" width="7" height="4" shape-rendering="crispEdges"><path fill="#000" d="M0 0h7v1h-7zM1 1h5v1h-5zM2 2h3v1h-3zM3 3h1v1h-1z"/></svg>
<div class="a" style="left:4px;top:371px;width:592px;height:25px;border-top:1px solid #808080;border-left:1px solid #808080;border-right:1px solid #fff;border-bottom:1px solid #fff"></div>
<div class="t" style="left:9.09px;top:378px;font-size:12px;;transform:scaleX(0.9072);transform-origin:0 0">Searching ... Done</div>
<div class="a" style="left:376px;top:376px;width:215px;height:15px;border-top:1px solid #808080;border-left:1px solid #808080;border-right:1px solid #fff;border-bottom:1px solid #fff"></div>
<div class="a" style="left:378px;top:378px;width:211px;height:11px;background:#0a246a"></div>
</body></html>
